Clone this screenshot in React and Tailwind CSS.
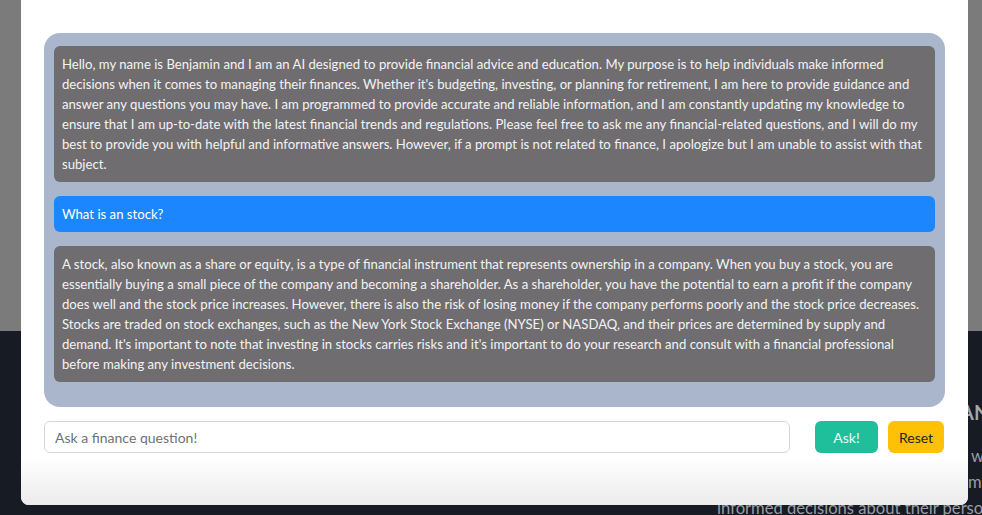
export default function App() {
  const msg1 =
    "Hello, my name is Benjamin and I am an AI designed to provide financial advice and education. My purpose is to help individuals make informed decisions when it comes to managing their finances. Whether it's budgeting, investing, or planning for retirement, I am here to provide guidance and answer any questions you may have. I am programmed to provide accurate and reliable information, and I am constantly updating my knowledge to ensure that I am up-to-date with the latest financial trends and regulations. Please feel free to ask me any financial-related questions, and I will do my best to provide you with helpful and informative answers. However, if a prompt is not related to finance, I apologize but I am unable to assist with that subject.";
  const msg3 =
    "A stock, also known as a share or equity, is a type of financial instrument that represents ownership in a company. When you buy a stock, you are essentially buying a small piece of the company and becoming a shareholder. As a shareholder, you have the potential to earn a profit if the company does well and the stock price increases. However, there is also the risk of losing money if the company performs poorly and the stock price decreases. Stocks are traded on stock exchanges, such as the New York Stock Exchange (NYSE) or NASDAQ, and their prices are determined by supply and demand. It's important to note that investing in stocks carries risks and it's important to do your research and consult with a financial professional before making any investment decisions.";

  return (
    <div
      className="relative w-full h-[515px] overflow-hidden flex flex-col"
      style={{ fontFamily: "Lato, 'Noto Sans', sans-serif" }}
    >
      {/* page behind the overlay */}
      <div className="h-[331px] bg-[#7b7b7b] shrink-0" />
      <div className="flex-1 bg-[#161b24] pt-[66px] whitespace-nowrap text-[#9a9ea5]">
        <div className="ml-[717px]">
          <div className="pl-[243px] text-[20px] font-bold leading-[30px] text-[#a3a7ad]">AN</div>
          <div className="mt-[16px] text-[16.6px] leading-[26px]">
            <div className="pl-[254px]">with</div>
            <div className="pl-[251px]">make</div>
            <div>informed decisions about their personal finances.</div>
          </div>
        </div>
      </div>

      {/* modal */}
      <div className="absolute left-[21px] top-0 w-[947px] h-[505px] bg-white rounded-b-lg flex flex-col overflow-hidden">
        <div className="px-[23px] pt-[33px]">
          <div className="bg-[#aab6cb] rounded-[16px] px-[10px] pt-[13px] pb-[25px] flex flex-col gap-[14px]">
            <div className="bg-[#6f6d70] rounded-md px-2 py-2 text-[13.15px] leading-[20px] text-[#f3f3f3]">
              {msg1}
            </div>
            <div className="bg-[#1c86fe] rounded-md px-2 py-2 text-[13.15px] leading-[20px] text-white">
              What is an stock?
            </div>
            <div className="bg-[#6f6d70] rounded-md px-2 py-2 text-[13.15px] leading-[20px] text-[#f3f3f3]">
              {msg3}
            </div>
          </div>
          <div className="mt-[14px] flex items-center">
            <input
              className="w-[746px] h-[32px] border border-[#d3d6da] rounded-md px-[10px] text-[14px] text-[#333] placeholder:text-[#6c727a] outline-none bg-white"
              placeholder="Ask a finance question!"
            />
            <button className="ml-[25px] w-[63px] h-[32px] rounded-md bg-[#20bf9b] text-[14px] text-[#eefaf6]">
              Ask!
            </button>
            <button className="ml-[10px] w-[56px] h-[32px] rounded-md bg-[#ffc107] text-[14px] text-[#212529]">
              Reset
            </button>
          </div>
        </div>
        <div className="flex-1 mt-[4px] bg-linear-to-b from-white to-[#ebebeb]" />
      </div>
    </div>
  );
}
